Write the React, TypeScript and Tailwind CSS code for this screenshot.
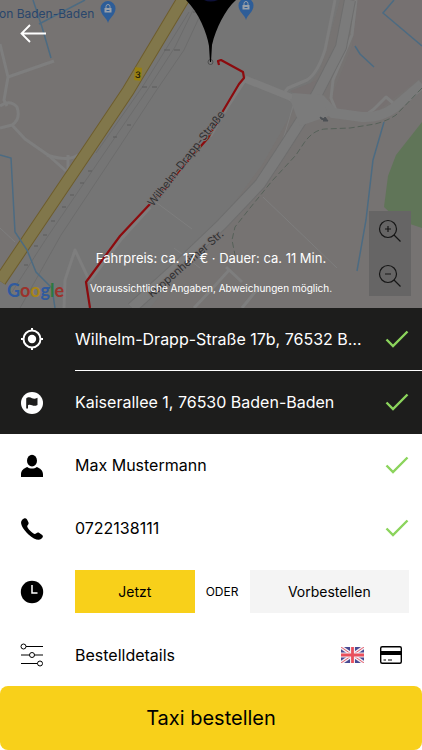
import { ReactNode } from 'react'

const ROUTE = 'M219 65L218 61L221 60L243 72L244 78L239 84L220 116L208 138L150 204L120 236L86 282L90 308'

function MapPin({ x, y }: { x: number; y: number }) {
  return (
    <g transform={`translate(${x} ${y})`}>
      <path d="M0 12C-1 7-7.500 4-7.500-2.500A7.500 7.500 0 0 1 7.500-2.500C7.500 4 1 7 0 12Z" fill="#2d5d98" />
      <rect x="-3.500" y="-3" width="7" height="4.500" fill="#99a0a9" />
      <path d="M-2-3v-1.500a2 2 0 0 1 4 0V-3" fill="none" stroke="#99a0a9" />
      <path d="M-1.500-.5h3" stroke="#2d5d98" />
    </g>
  )
}

function MapView() {
  return (
    <svg className="absolute inset-0 h-full w-full" viewBox="0 0 422 308" preserveAspectRatio="xMidYMid slice" aria-hidden="true">
      <rect width="422" height="308" fill="#767372" />
      <path d="M186 0H340L320 70L300 98L282 130L262 165L225 215L195 250L150 308H0V280L90 150Z" fill="#757575" />
      <path d="M353 0L337 62Q328 76 318 80L290 91L303 98L315 90L338 48L352 0ZM358 0L352 46L332 96L338 116L372 116L391 100L422 77V0Z" fill="#767171" />
      <path d="M422 122L396 155L388 176L384 207L398 220L422 228Z" fill="#607558" />

      {/* minor streets */}
      <g fill="none" stroke="#7e7e7e" strokeLinejoin="round">
        <path d="M0 44L8 77L4 100L7 106M8 77L54 61M0 106Q10 99 17 107Q21 119 12 125L0 128M12 125L25 139L48 155L66 171" strokeWidth="3" />
        <path d="M47 155Q68 162 78 155M68 155V171M64 308L65 280L75 250L90 282" strokeWidth="3" />
        <path d="M335 0L325 50Q317 74 307 80L288 88L284 93M356 0L352 35L333 80L331 98L338 115H366L374 109L386 97L393 103" strokeWidth="3" />
        <path d="M293 106L286 130L278 155L262 179L223 221" strokeWidth="1" />
        <path d="M153 200L192 229M174 248L200 268M263 197L337 268M0 228L15 242" strokeWidth="1" />
        <path d="M246 78L225 110L210 136M150 207L120 240L90 280" strokeWidth="4" />
        <path d="M226 267L242 282M230 269L211 290L194 308M260 286L242 308" strokeWidth="3" />
        <path d="M245 79L290 97L310 110" strokeWidth="7" />
      </g>
      <path d="M350 0L341 47L318 92L306 113L281 152L260 184L222 224L175 269L132 308" fill="none" stroke="#6e6e6e" strokeWidth="12" />
      <path d="M350 0L341 47L318 92L306 113L281 152L260 184L222 224L175 269L132 308" fill="none" stroke="#7b7b7b" strokeWidth="10" />
      <path d="M292 98L321 100L333 113L362 117Q380 118 394 108L422 84" fill="none" stroke="#7b7b7b" strokeWidth="10" />
      <path d="M290 99H322L329 116L300 126Z" fill="#7b7b7b" />

      {/* railway */}
      <g fill="none" stroke="#6c6c6c" strokeWidth="1">
        <path d="M195 6L175 47L148 89L103 155L46 239L12 292M204 7L184 50L156 91L118 149L61 235L20 308M189 12L143 86L96 153" />
        <path d="M193 12h7M164 50h6M174 50h6M142 87h5M152 87h5M113 137h4M127 125h4M88 171h4M80 183h4M70 195h4M62 207h4M51 221h4M43 235h4M34 246h4M24 265h4" stroke="#5d5d5d" />
      </g>
      <path d="M422 88L396 115Q387 121 375 124L350 128L325 129Q313 130 304 143L296 155L272 181L250 208L235 227L232 240L235 255" fill="none" stroke="#566159" strokeWidth="1" strokeDasharray="6 3" />

      {/* main road */}
      <path d="M185-4L128 91L85 155L0 281" fill="none" stroke="#6e5d2c" strokeWidth="13" />
      <path d="M185-4L128 91L85 155L0 281" fill="none" stroke="#81774b" strokeWidth="11" />
      <g fill="none" stroke="#4c6b82" strokeWidth="1.500">
        <path d="M33 0L42 27L51 58M39 24L85 0M0 155L11 158L15 232L27 250L36 272L52 288L55 308" />
        <path d="M394 0L383 13L422 46M355 46L360 54L374 67M384 122L373 160L366 220L357 271" />
      </g>
      <g transform="rotate(5 138 74)">
        <rect x="134.500" y="67.500" width="7" height="13" rx="1" fill="#98800f" />
        <text x="138" y="78" textAnchor="middle" fontFamily="Inter, sans-serif" fontSize="9" fontWeight="600" fill="#24210f">3</text>
      </g>
      <path d="M320 117l4 2 1-2 3 4-5 0 1-1-3-1Z" fill="#4c5054" stroke="#4c5054" />

      <path d={ROUTE} fill="none" stroke="#8c0b0e" strokeWidth="2.200" strokeLinejoin="round" />
      <g fontFamily="Inter, sans-serif" fontSize="11" fill="#303031" stroke="#777474" strokeWidth="2" paintOrder="stroke">
        <text transform="translate(153 207) rotate(-52)">Wilhelm-Drapp-Straße</text>
        <text transform="translate(152 298) rotate(-41)">Kuppenheimer Str.</text>
      </g>
      <path d="M160 196L220 120" stroke="#8c0b0e" strokeWidth="1" strokeDasharray="2 7" />
      <text x="-1" y="18" fontFamily="Inter, sans-serif" fontSize="12" fill="#29466c">on Baden-Baden</text>
      <MapPin x={108} y={11} />
      <MapPin x={246} y={8} />
      <circle cx="210.500" cy="62" r="2.500" fill="#777" stroke="#4e4e4e" />
      <path d="M186 0C199 13 207 33 209 46L210 62H211L212 45C216 28 225 10 236 0Z" fill="#000" />
      <path d="M204 0Q210 3 218 0Z" fill="#0d1038" />
    </svg>
  )
}

function ZoomIcon({ plus }: { plus?: boolean }) {
  return (
    <svg className="h-6 w-6" viewBox="0 0 24 24" fill="none" stroke="#161616" strokeWidth="1.200" aria-hidden="true">
      <circle cx="10" cy="10" r="8.500" />
      <path d="M16 16L22.500 22.500M7 10h6" />
      {plus && <path d="M10 7v6" />}
    </svg>
  )
}

function Check() {
  return (
    <svg className="h-6 w-6 shrink-0" viewBox="0 0 24 24" fill="none" stroke="#8bd45c" strokeWidth="2.400" aria-hidden="true">
      <path d="M1.500 12.500L8 19L22.500 4.500" />
    </svg>
  )
}

function RowIcon({ children }: { children: ReactNode }) {
  return (
    <svg className="ml-5 h-6 w-6 shrink-0" viewBox="0 0 24 24" fill="currentColor" aria-hidden="true">
      {children}
    </svg>
  )
}

interface FieldProps {
  label: string
  value: string
  type?: string
  divider?: boolean
  icon: ReactNode
}

function Field({ label, value, type = 'text', divider, icon }: FieldProps) {
  return (
    <div className="flex h-[63px] items-center">
      <RowIcon>{icon}</RowIcon>
      <div className={`ml-[31px] flex h-full min-w-0 flex-1 items-center gap-4 border-b pr-[13px] ${divider ? 'border-white' : 'border-transparent'}`}>
        <input
          type={type}
          aria-label={label}
          defaultValue={value}
          className="min-w-0 flex-1 text-ellipsis bg-transparent text-base outline-none"
        />
        <Check />
      </div>
    </div>
  )
}

const icons = {
  target: (
    <>
      <circle cx="12" cy="11" r="8.500" fill="none" stroke="currentColor" strokeWidth="2" />
      <circle cx="12" cy="11" r="4.200" />
      <path d="M11 0h2v3h-2zM11 19h2v3h-2zM1 10h3v2H1zM20 10h3v2h-3z" />
    </>
  ),
  flag: (
    <>
      <circle cx="12" cy="12" r="11" />
      <path d="M6.200 17.500V7.500C8.500 5.500 10.500 6.500 12 7.200C14 8 15.500 7.700 17.500 6.700V14C15.500 15 14 15.200 12 14.300C10.500 13.600 9.500 13.500 8 14.200V17.500Z" fill="#1d1d1c" />
    </>
  ),
  user: (
    <>
      <ellipse cx="12" cy="6.700" rx="5" ry="5.900" />
      <path d="M1 23V20.500C1 16 4 14.500 7.200 13C10 15 14 15 16.800 13C20 14.500 23 16 23 20.500V23Z" />
    </>
  ),
  phone: (
    <path d="M4.500 1.300C5.800.8 6.500 1.500 7.300 3L8.500 5.500C9 6.800 8 7.700 7.300 8.700C6.700 9.700 8.500 12 10.200 13.700C12.200 15.700 14.300 17.300 15.500 16.800C16.500 16 17.300 15 18.600 15.600L22.200 18C23.700 19.200 22.700 20.500 21 22C18.500 24 13.500 22 8.500 17.400C3 12 .2 7 1.300 4.200C2 2.800 3.300 1.700 4.500 1.300Z" />
  ),
  clock: (
    <>
      <circle cx="12" cy="12" r="11.200" />
      <path d="M12 5V13H17.500" fill="none" stroke="#fff" strokeWidth="1.500" />
    </>
  ),
  sliders: (
    <g fill="none" stroke="currentColor" strokeWidth="1">
      <path d="M6 3.500H23M1 12H9.500M14.500 12H23M1 20.500H17.500" />
      <circle cx="3.500" cy="3.500" r="2.500" />
      <circle cx="12" cy="12" r="2.500" />
      <circle cx="20" cy="20.500" r="2.500" />
    </g>
  ),
}

function UkFlag() {
  return (
    <svg className="h-4 w-[23px]" viewBox="0 0 23 16" aria-hidden="true">
      <rect width="23" height="16" fill="#484a91" />
      <path d="M0 0L23 16M23 0L0 16" stroke="#f3edf3" strokeWidth="3.500" />
      <path d="M0 0L23 16M23 0L0 16" stroke="#e5606e" strokeWidth="1" />
      <path d="M11.500 0V16M0 8H23" stroke="#f3edf3" strokeWidth="5" />
      <path d="M11.500 0V16M0 8H23" stroke="#e9505c" strokeWidth="2.800" />
    </svg>
  )
}

function CardIcon() {
  return (
    <svg className="h-6 w-6" viewBox="0 0 24 24" aria-hidden="true">
      <rect x="1.700" y="3.700" width="20.600" height="16.600" rx="1.500" fill="none" stroke="#000" strokeWidth="1.400" />
      <path d="M1.500 8H22.500V12H1.500Z" />
      <path d="M4.500 17H7M9 17H13" stroke="#000" strokeWidth="1.200" />
    </svg>
  )
}

export default function App() {
  return (
    <main className="flex min-h-screen flex-col bg-white font-['Inter',sans-serif] text-black">
      <section className="relative flex min-h-[308px] flex-1 flex-col justify-between overflow-hidden">
        <MapView />
        <button type="button" aria-label="Zurück" className="relative ml-5 mt-5 self-start">
          <svg className="h-[26px] w-[27px]" viewBox="0 0 27 26" fill="none" stroke="#fff" strokeWidth="1.800" aria-hidden="true">
            <path d="M26 13.500H1.500M10 5L1.500 13.500L10 22" />
          </svg>
        </button>
        <div className="relative pb-3 text-center text-white">
          <p className="text-[13px] leading-5">Fahrpreis: ca. 17 € · Dauer: ca. 11 Min.</p>
          <p className="mt-3 text-[10px] leading-4">Voraussichtliche Angaben, Abweichungen möglich.</p>
        </div>
        <div className="absolute bottom-1.5 left-[7px] font-['Lato',sans-serif] text-lg font-bold leading-6">
          <span className="text-[#305a9e]">G</span>
          <span className="text-[#9c322b]">o</span>
          <span className="text-[#a88419]">o</span>
          <span className="text-[#305a9e]">g</span>
          <span className="text-[#2a7a40]">l</span>
          <span className="text-[#9c322b]">e</span>
        </div>
        <div className="absolute bottom-3 right-[11px] flex h-[85px] w-[42px] flex-col justify-between bg-[#666565] py-2">
          <button type="button" aria-label="Vergrößern" className="flex justify-center">
            <ZoomIcon plus />
          </button>
          <button type="button" aria-label="Verkleinern" className="flex justify-center">
            <ZoomIcon />
          </button>
        </div>
      </section>

      <section className="bg-[#1d1d1c] text-white">
        <Field label="Abholort" value="Wilhelm-Drapp-Straße 17b, 76532 Baden-Baden" divider icon={icons.target} />
        <Field label="Zielort" value="Kaiserallee 1, 76530 Baden-Baden" icon={icons.flag} />
      </section>

      <section>
        <Field label="Name" value="Max Mustermann" icon={icons.user} />
        <Field label="Telefon" value="0722138111" type="tel" icon={icons.phone} />
        <div className="flex h-[63px] items-center pr-[13px]">
          <RowIcon>{icons.clock}</RowIcon>
          <div className="ml-[31px] flex flex-1 items-center text-sm">
            <button type="button" className="h-[43px] flex-[3] bg-[#f8d01a]">Jetzt</button>
            <span className="w-[55px] text-center text-xs">ODER</span>
            <button type="button" className="h-[43px] flex-[4] bg-[#f4f4f4]">Vorbestellen</button>
          </div>
        </div>
        <button type="button" className="flex h-[63px] w-full items-center pr-[19px] text-left">
          <RowIcon>{icons.sliders}</RowIcon>
          <span className="ml-[31px] flex-1 text-base">Bestelldetails</span>
          <span className="flex items-center gap-[15px]">
            <UkFlag />
            <CardIcon />
          </span>
        </button>
      </section>

      <button type="button" className="h-16 rounded-lg bg-[#f8d01a] text-xl">
        Taxi bestellen
      </button>
    </main>
  )
}
